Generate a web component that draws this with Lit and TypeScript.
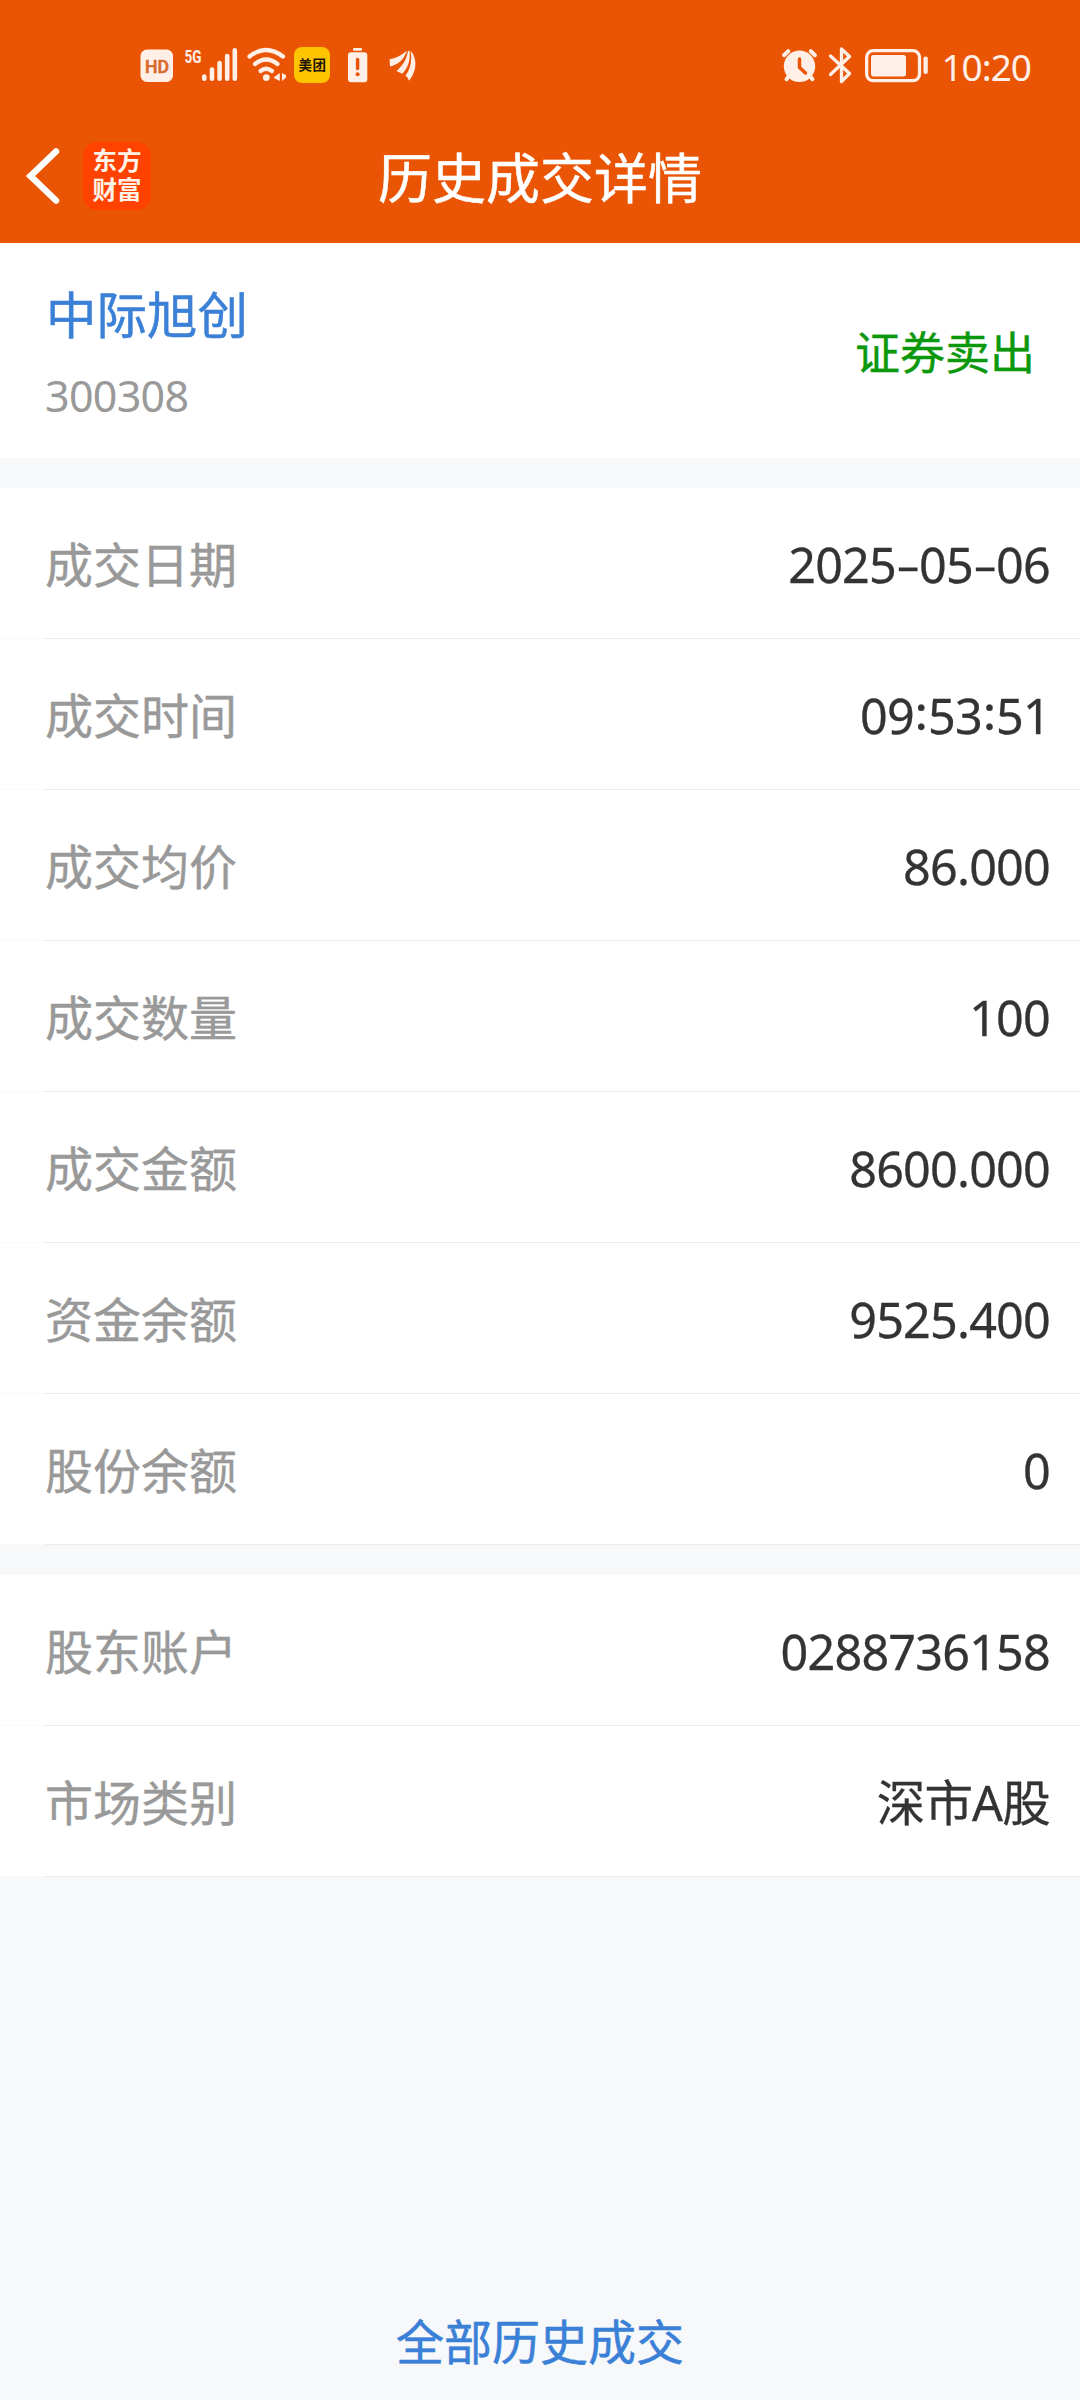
import { LitElement, html, css, svg } from "lit";
import { customElement, property } from "lit/decorators.js";

const PALE = "#ffefe6";
const ORANGE = "#e95504";

/** One status-bar glyph; x and w give its horizontal slice of the bar. */
const glyph = (x: number, w: number, label: string, body: unknown) => html`
  <svg width=${w} height="40" viewBox="${x} 45 ${w} 40" role="img" aria-label=${label}>${body}</svg>
`;

@customElement("status-bar")
class StatusBar extends LitElement {
  static styles = css`
    :host {
      display: flex;
      justify-content: space-between;
      box-sizing: border-box;
      height: 108px;
      padding: 45px 49px 0 140px;
      font-family: "Noto Sans", "Noto Sans CJK SC", sans-serif;
      color: #ffefe6;
    }
    .group {
      display: flex;
      height: 40px;
      align-items: center;
    }
    .left { gap: 8px; }
    .right { gap: 10px; }
    svg { display: block; flex: none; }
    .time {
      font-size: 37px;
      line-height: 40px;
      letter-spacing: -1px;
      margin-left: 2px;
      padding-top: 3px;
    }
    .hd { font: 500 19px Roboto, sans-serif; }
    .net { font: 700 19px "Roboto", sans-serif; }
    .mt { font: 700 13.5px "Noto Sans CJK SC", sans-serif; }
  `;
  render() {
    return html`
      <div class="group left">
        ${glyph(140, 36, "HD", svg`
          <rect x="140.5" y="49.5" width="32.5" height="32.5" rx="6.5" fill=${PALE} />
          <text class="hd" x="145" y="73.3" textLength="24" lengthAdjust="spacingAndGlyphs" fill="#d9682d" stroke="#d9682d" stroke-width=".6">HD</text>`)}
        ${glyph(184, 54, "5G", svg`
          <text class="net" x="184.5" y="62.5" textLength="17" lengthAdjust="spacingAndGlyphs" fill=${PALE}>5G</text>
          <g stroke=${PALE} stroke-width="4.6" stroke-linecap="round">
            <path d="M204.3 76.5V78.7M212 69.5V78.7M219.6 63V78.7M227.2 56V78.7M234.8 50.3V78.7" />
          </g>`)}
        ${glyph(246, 40, "Wi-Fi", svg`
          <g fill="none" stroke=${PALE} stroke-width="4.2" stroke-linecap="round">
            <path d="M249.5 56.5Q266 43.5 283 56.5" />
            <path d="M255 64Q266 55 277.5 64" />
            <path d="M260.5 71Q266 66.5 272 71" />
          </g>
          <circle cx="266.3" cy="77.6" r="3.4" fill=${PALE} />
          <path d="M279.8 73V81L273.5 77.8ZM282 73L287.5 76.2L282 81Z" fill=${PALE} />`)}
        ${glyph(294, 44, "美团", svg`
          <rect x="294" y="47" width="36" height="36" rx="8" fill="#ffc400" />
          <text class="mt" x="298.4" y="70.4" textLength="27.5" fill="#1e1500">美团</text>`)}
        ${glyph(346, 35, "电量提醒", svg`
          <rect x="353" y="48" width="9" height="2.8" rx="1" fill=${PALE} />
          <rect x="348" y="52.3" width="19.3" height="30" rx="3" fill=${PALE} />
          <path d="M357.6 59.5V68.5" stroke=${ORANGE} stroke-width="3.4" stroke-linecap="round" />
          <circle cx="357.6" cy="74.2" r="2" fill=${ORANGE} />`)}
        ${glyph(389, 28, "通知", svg`
          <g fill=${PALE}>
            <path d="M390 66.5L389.6 59.2C395.5 58.6 401 55.500 407 50.500C403.500 60.500 398 64.500 390 66.500Z" />
            <path d="M402.200 73.800L396.500 71C401.500 66.500 406.500 60.500 407.800 51.500L409.500 50.500C411 59.500 408 68 402.200 73.800Z" />
            <path d="M409 80.800C408.300 78.500 407.200 77 405.500 75.800C410.500 69 412.300 60.500 410.600 50.800C417.500 58 417 71.500 409 80.800Z" />
          </g>`)}
      </div>
      <div class="group right">
        ${glyph(781, 38, "闹钟", svg`
          <g stroke=${PALE} stroke-width="4" stroke-linecap="round">
            <path d="M784 55.2L788.2 51.2M815 55.2L810.8 51.2M789 76L786.5 79.2M810 76L812.5 79.2" />
          </g>
          <circle cx="799.5" cy="66.3" r="15.7" fill=${PALE} />
          <path d="M799.5 59V67.5L805.5 73" fill="none" stroke=${ORANGE} stroke-width="3.5" stroke-linecap="round" stroke-linejoin="round" />`)}
        ${glyph(829, 24, "蓝牙", svg`
          <path d="M830.5 56L849.5 73.5L841.5 81.5V49L849.5 56.5L830.5 74.5" fill="none" stroke=${PALE} stroke-width="3.3" stroke-linecap="round" stroke-linejoin="round" />`)}
        ${glyph(863, 66, "电量", svg`
          <rect x="866.7" y="50.7" width="52.8" height="30" rx="6.5" fill="none" stroke=${PALE} stroke-width="3.3" />
          <rect x="871" y="55" width="35" height="21.5" rx="2.5" fill=${PALE} />
          <rect x="923.5" y="56.5" width="4.3" height="17.5" rx="2" fill=${PALE} />`)}
        <span class="time">10:20</span>
      </div>
    `;
  }
}

@customElement("nav-bar")
class NavBar extends LitElement {
  static styles = css`
    :host {
      display: grid;
      grid-template-columns: 300px 1fr 300px;
      align-items: center;
      height: 135px;
      color: #fff;
      font-family: "Noto Sans CJK SC", sans-serif;
    }
    .left {
      display: flex;
      align-items: center;
      gap: 23px;
      padding-left: 25px;
    }
    .back { display: block; }
    .logo {
      display: flex;
      flex-direction: column;
      align-items: center;
      justify-content: center;
      width: 68px;
      height: 68px;
      border-radius: 14px;
      background: #ff4200;
      color: #fff3e8;
      font-family: "Noto Sans CJK SC", sans-serif;
      font-weight: 700;
      font-size: 24.5px;
      line-height: 29px;
      padding-bottom: 3px;
      box-sizing: border-box;
    }
    .title {
      margin: 0;
      text-align: center;
      font-size: 54px;
      font-weight: 400;
      line-height: 80px;
      white-space: nowrap;
      -webkit-text-stroke: 0.5px currentColor;
    }
  `;
  render() {
    return html`
      <div class="left">
        <svg class="back" width="35" height="60" viewBox="0 0 35 60">
          <path d="M31 5.5L5.5 30L31 54.5" fill="none" stroke="#fff" stroke-width="6.5" stroke-linejoin="miter" stroke-linecap="round" />
        </svg>
        <div class="logo"><span>东方</span><span>财富</span></div>
      </div>
      <h1 class="title">历史成交详情</h1>
    `;
  }
}

@customElement("detail-row")
class DetailRow extends LitElement {
  @property() label = "";
  @property() value = "";

  static styles = css`
    :host {
      display: flex;
      flex-direction: column;
      height: 151px;
      background: #fff;
      font-family: "Noto Sans", "Noto Sans CJK SC", sans-serif;
    }
    .body {
      flex: 1;
      display: flex;
      align-items: center;
      justify-content: space-between;
      padding: 0 30px 0 45px;
    }
    .label {
      font-family: "Noto Sans CJK SC", sans-serif;
      font-size: 48px;
      line-height: 70px;
      padding-bottom: 3px;
      color: #999;
      -webkit-text-stroke: 0.4px currentColor;
    }
    .value {
      font-size: 48.5px;
      line-height: 70px;
      padding-top: 1px;
      letter-spacing: -0.8px;
      color: #333;
      -webkit-text-stroke: 0.3px currentColor;
    }
    .mark {
      display: inline-block;
      line-height: 1;
      font-family: Inter, sans-serif;
    }
    .dash {
      margin: 0 0.8px;
      transform: translateY(2px) scale(1.18, 0.85);
    }
    .colon {
      margin: 0 0.5px;
      transform: translateY(-4px);
    }
    .rule {
      height: 1px;
      border-left: 45px solid #f9f9f9;
      background: #ebebeb;
    }
  `;
  private part(p: string) {
    if (p === "-") return html`<span class="mark dash">-</span>`;
    if (p === ":") return html`<span class="mark colon">:</span>`;
    return p;
  }
  render() {
    return html`
      <div class="body">
        <span class="label">${this.label}</span>
        <span class="value">${this.value.split(/([-:])/).map((p) => this.part(p))}</span>
      </div>
      <div class="rule"></div>
    `;
  }
}

@customElement("app-root")
class AppRoot extends LitElement {
  static styles = css`
    :host {
      display: flex;
      flex-direction: column;
      width: 1080px;
      height: 2400px;
      background: #f6f8fa;
      font-family: "Noto Sans", "Noto Sans CJK SC", sans-serif;
    }
    .top { background: #e95504; }
    .stock {
      display: flex;
      justify-content: space-between;
      align-items: center;
      height: 215px;
      box-sizing: border-box;
      padding: 0 45px 0 46px;
      background: #fff;
    }
    .name {
      font-family: "Noto Sans CJK SC", sans-serif;
      font-size: 50.5px;
      line-height: 74px;
      color: #3b80d7;
      -webkit-text-stroke: 0.5px currentColor;
    }
    .code {
      font-size: 43px;
      line-height: 60px;
      letter-spacing: -0.7px;
      color: #999;
      padding-top: 17px;
      margin-left: -1px;
    }
    .side {
      font-family: "Noto Sans CJK SC", sans-serif;
      font-size: 45px;
      line-height: 66px;
      color: #0c980c;
      -webkit-text-stroke: 0.4px currentColor;
    }
    .card { margin-top: 30px; }
    .all {
      margin-top: auto;
      padding-bottom: 26px;
      text-align: center;
      font-family: "Noto Sans CJK SC", sans-serif;
      font-size: 48px;
      line-height: 70px;
      color: #3b80d7;
      -webkit-text-stroke: 0.5px currentColor;
    }
  `;

  private trade = [
    ["成交日期", "2025-05-06"],
    ["成交时间", "09:53:51"],
    ["成交均价", "86.000"],
    ["成交数量", "100"],
    ["成交金额", "8600.000"],
    ["资金余额", "9525.400"],
    ["股份余额", "0"],
  ];
  private account = [
    ["股东账户", "0288736158"],
    ["市场类别", "深市A股"],
  ];

  private rows(list: string[][]) {
    return html`<section class="card">
      ${list.map(([l, v]) => html`<detail-row label=${l} value=${v}></detail-row>`)}
    </section>`;
  }

  render() {
    return html`
      <header class="top">
        <status-bar></status-bar>
        <nav-bar></nav-bar>
      </header>
      <section class="stock">
        <div>
          <div class="name">中际旭创</div>
          <div class="code">300308</div>
        </div>
        <div class="side">证券卖出</div>
      </section>
      ${this.rows(this.trade)}
      ${this.rows(this.account)}
      <div class="all">全部历史成交</div>
    `;
  }
}
